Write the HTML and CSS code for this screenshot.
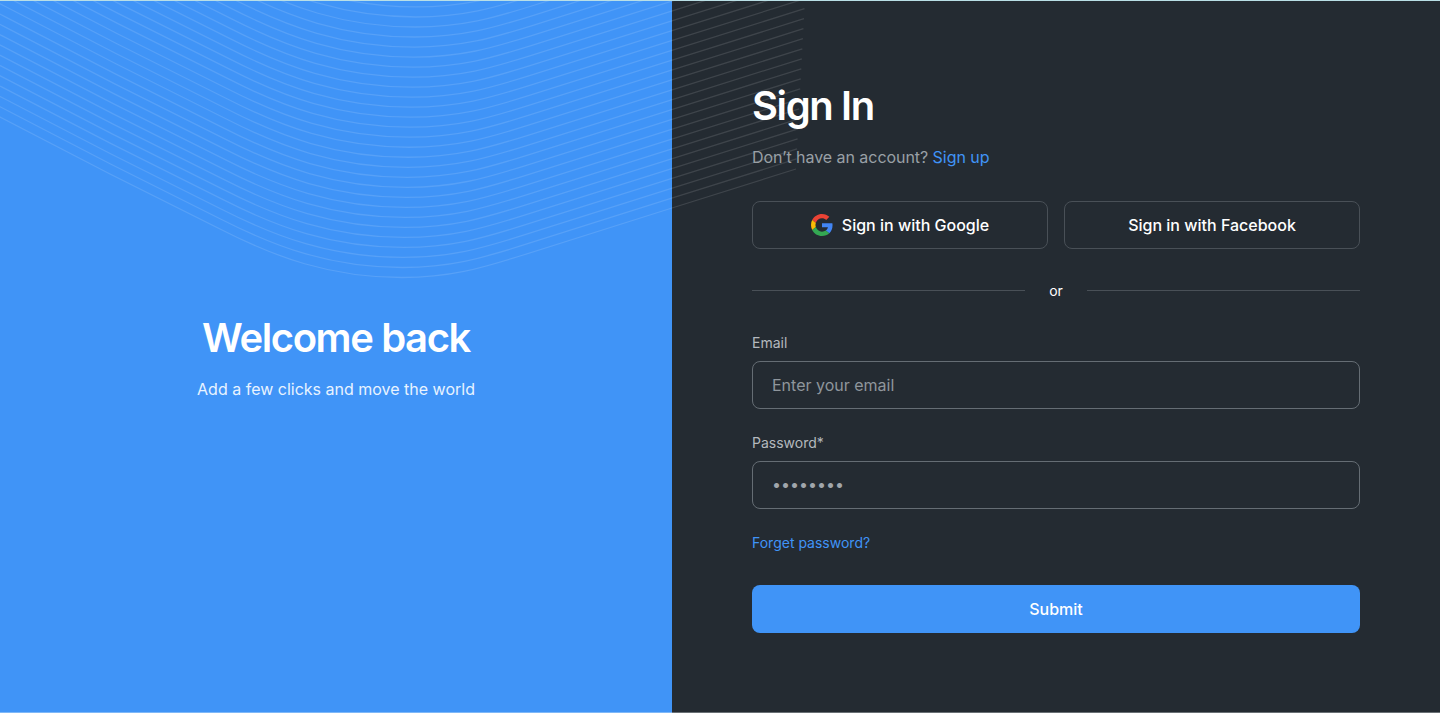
FILE: index.html
```html
<!DOCTYPE html>
<html lang="en">
<head>
<meta charset="utf-8">
<title>Sign In</title>
<link rel="stylesheet" href="styles.css">
</head>
<body>
<main class="page">
  <svg class="waves" id="waves" width="810" height="290" viewBox="0 0 810 290" aria-hidden="true">
    <defs><path id="wave" d="M-60 86.5L0 117L110 174L220 229C275 257 330 277.5 402 277.5C450 277.5 480 268.500 520 256L672 208L796 169"/></defs>
  </svg>
  <section class="welcome">
    <h1 class="title">Welcome back</h1>
    <p class="tagline">Add a few clicks and move the world</p>
  </section>
  <section class="panel">
    <h2 class="title">Sign In</h2>
    <p class="hint">Don’t have an account? <a class="link" href="#">Sign up</a></p>
    <div class="social">
      <button class="social-btn" type="button">
        <svg class="google" viewBox="0 0 48 48" aria-hidden="true"><path fill="#ea4335" d="M24 9.500c3.540 0 6.710 1.220 9.210 3.600l6.850-6.850C35.900 2.380 30.470 0 24 0 14.620 0 6.510 5.380 2.560 13.220l7.980 6.190C12.430 13.720 17.740 9.500 24 9.500z"/><path fill="#4285f4" d="M46.980 24.550c0-1.570-.15-3.090-.38-4.550H24v9.020h12.940c-.58 2.960-2.260 5.480-4.780 7.180l7.730 6c4.510-4.180 7.090-10.360 7.090-17.650z"/><path fill="#fbbc05" d="M10.530 28.590c-.48-1.450-.76-2.990-.76-4.590s.27-3.140.76-4.590l-7.980-6.190C.92 16.460 0 20.120 0 24c0 3.880.92 7.540 2.560 10.780l7.970-6.190z"/><path fill="#34a853" d="M24 48c6.480 0 11.930-2.130 15.890-5.810l-7.730-6c-2.150 1.450-4.920 2.300-8.160 2.300-6.260 0-11.570-4.220-13.470-9.910l-7.980 6.190C6.510 42.620 14.620 48 24 48z"/></svg>
        <span>Sign in with Google</span>
      </button>
      <button class="social-btn" type="button"><span>Sign in with Facebook</span></button>
    </div>
    <div class="divider"><span>or</span></div>
    <form class="form">
      <label class="label" for="email">Email</label>
      <input class="input" id="email" type="text" placeholder="Enter your email">
      <label class="label" for="password">Password*</label>
      <input class="input dots" id="password" type="text" placeholder="••••••••">
      <a class="link forgot" href="#">Forget password?</a>
      <button class="submit" type="button">Submit</button>
    </form>
  </section>
</main>
<script src="waves.js"></script>
</body>
</html>
```
FILE: styles.css
```css
* { box-sizing: border-box; margin: 0; padding: 0; }

body { font-family: Inter, "Liberation Sans", sans-serif; color: #fff; background: #242b32; }

.page {
  position: relative;
  display: grid;
  grid-template-columns: 672px 768px;
  width: 1440px;
  height: 713px;
  overflow: hidden;
  border-top: 1px solid #b9dfe6;
}

.waves { position: absolute; left: 0; top: -1px; fill: none; stroke: #fff; stroke-opacity: .12; stroke-width: 1.3; pointer-events: none; clip-path: inset(1px 0 0 0); }

.welcome { background: #4094f7; text-align: center; padding-top: 313px; border-bottom: 1px solid #7fb8f8; }

.title { position: relative; font-size: 40px; line-height: 48px; font-weight: 600; letter-spacing: -1.4px; }

.tagline { position: relative; margin-top: 15px; font-size: 16px; line-height: 24px; color: #e8f3ff; }

.panel { background: #242b32; padding: 81px 80px 0; border-bottom: 1px solid #697075; }

.hint { position: relative; margin-top: 15px; font-size: 16px; line-height: 24px; letter-spacing: -.05px; color: #99a0a6; }

.link { color: #4094f7; text-decoration: none; }

.social { display: grid; grid-template-columns: 1fr 1fr; gap: 16px; margin-top: 32px; }

.social-btn {
  display: flex;
  align-items: center;
  justify-content: center;
  gap: 9px;
  height: 48px;
  border: 1px solid #495057;
  border-radius: 8px;
  background: none;
  color: #fff;
  font: 500 16px/24px Inter, sans-serif;
}

.google { width: 22px; height: 22px; }

.divider { display: flex; align-items: center; gap: 24px; margin-top: 30px; font-size: 14px; line-height: 24px; }
.divider::before, .divider::after { content: ""; flex: 1; height: 1px; margin-bottom: 1px; background: #495057; }

.form { display: flex; flex-direction: column; margin-top: 28px; }

.label { font-size: 14px; line-height: 24px; color: #b4b9be; margin-bottom: 6px; }

.input {
  height: 48px;
  padding: 0 19px;
  border: 1px solid #656d74;
  border-radius: 8px;
  background: none;
  color: #fff;
  font: 400 16px/24px Inter, sans-serif;
  margin-bottom: 22px;
}
.input::placeholder { color: #8f969c; opacity: 1; }
.dots { padding-bottom: 2px; }
.dots::placeholder { color: #a0a6ab; }

.forgot { font-size: 14px; line-height: 24px; }

.submit { margin-top: 30px; height: 48px; border: 0; border-radius: 8px; background: #4094f7; color: #fff; font: 500 16px/24px Inter, sans-serif; }
```
FILE: waves.js
```js
// Stack copies of the base curve upward, each nudged slightly right.
const svg = document.getElementById("waves");
for (let i = 0; i < 29; i++) {
  const use = document.createElementNS("http://www.w3.org/2000/svg", "use");
  use.setAttribute("href", "#wave");
  use.setAttribute("transform", `translate(${i * 0.53} ${i * -10.02})`);
  svg.appendChild(use);
}
```
